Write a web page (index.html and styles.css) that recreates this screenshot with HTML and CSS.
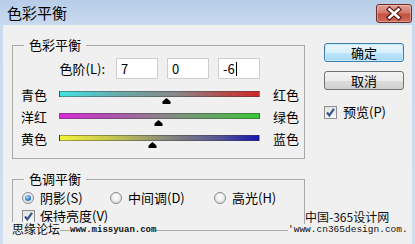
FILE: index.html
```html
<!DOCTYPE html>
<html lang="zh-CN">
<head>
<meta charset="utf-8">
<title>色彩平衡</title>
<link rel="stylesheet" href="styles.css">
</head>
<body>
<div class="window">
  <div class="titlebar">
    <span class="title">色彩平衡</span>
    <div class="close">
      <svg width="34" height="17" viewBox="0 0 34 17">
        <path d="M12.5 4.5 L21.5 12.5 M21.5 4.5 L12.5 12.5" stroke="#5e1d16" stroke-width="5" stroke-linecap="square" fill="none"/>
        <path d="M12.5 4.5 L21.5 12.5 M21.5 4.5 L12.5 12.5" stroke="#ffffff" stroke-width="2.6" stroke-linecap="square" fill="none"/>
      </svg>
    </div>
  </div>
  <div class="client">
    <div class="main">
      <fieldset class="group balance">
        <legend>色彩平衡</legend>
        <div class="levels">
          <span class="levels-label">色阶(L):</span>
          <span class="field">7</span>
          <span class="field">0</span>
          <span class="field">-6<span class="caret"></span></span>
        </div>
        <div class="slider-row">
          <span class="lbl">青色</span>
          <div class="track cyan-red">
            <svg class="thumb" style="left:102px" width="9" height="6" viewBox="0 0 9 6"><path d="M4.5 0 L8.5 3.5 V6 H0.5 V3.5 Z" fill="#000"/></svg>
          </div>
          <span class="lbl-r">红色</span>
        </div>
        <div class="slider-row">
          <span class="lbl">洋红</span>
          <div class="track magenta-green">
            <svg class="thumb" style="left:94px" width="9" height="6" viewBox="0 0 9 6"><path d="M4.5 0 L8.5 3.5 V6 H0.5 V3.5 Z" fill="#000"/></svg>
          </div>
          <span class="lbl-r">绿色</span>
        </div>
        <div class="slider-row">
          <span class="lbl">黄色</span>
          <div class="track yellow-blue">
            <svg class="thumb" style="left:88px" width="9" height="6" viewBox="0 0 9 6"><path d="M4.5 0 L8.5 3.5 V6 H0.5 V3.5 Z" fill="#000"/></svg>
          </div>
          <span class="lbl-r">蓝色</span>
        </div>
      </fieldset>
      <fieldset class="group tone">
        <legend>色调平衡</legend>
        <div class="radios">
          <span class="opt opt-a"><span class="radio on"></span>阴影(S)</span>
          <span class="opt opt-b"><span class="radio"></span>中间调(D)</span>
          <span class="opt"><span class="radio"></span>高光(H)</span>
        </div>
        <div class="opt keep">
          <span class="check"><svg width="11" height="11" viewBox="0 0 11 11"><path d="M2 5.5 L4.3 8.5 L9 1.8" stroke="#3b5592" stroke-width="2.2" fill="none"/></svg></span>保持亮度(V)
        </div>
      </fieldset>
    </div>
    <div class="side">
      <div class="btn default">确定</div>
      <div class="btn">取消</div>
      <div class="opt preview">
        <span class="check"><svg width="11" height="11" viewBox="0 0 11 11"><path d="M2 5.5 L4.3 8.5 L9 1.8" stroke="#3b5592" stroke-width="2.2" fill="none"/></svg></span>预览(P)
      </div>
    </div>
  </div>
  <span class="wm wm-cn">思缘论坛</span>
  <span class="wm wm-url">www.missyuan.com</span>
  <span class="wm wm-r1">中国-365设计网</span>
  <span class="wm wm-r2">'www.cn365design.com.</span>
</div>
</body>
</html>
```

FILE: styles.css
```css
html, body {
  margin: 0;
  padding: 0;
}
body {
  width: 415px;
  height: 244px;
  overflow: hidden;
  background: #f0f0f0;
  font-family: "Noto Sans CJK SC", "Noto Sans", sans-serif;
  font-size: 13px;
  color: #000;
}
.window {
  position: relative;
  width: 415px;
  height: 244px;
  background: linear-gradient(to bottom, #b7cde8 0, #c8daef 25px, #cfdff1 100%);
}
.titlebar {
  height: 25px;
  display: flex;
  justify-content: space-between;
  align-items: flex-start;
  padding: 0 3px 0 7px;
}
.title {
  font-size: 15px;
  line-height: 25px;
  color: #000;
}
.close {
  margin-top: 4px;
  width: 36px;
  height: 19px;
  box-sizing: border-box;
  border: 1px solid #6e2b23;
  border-radius: 3px;
  background: linear-gradient(to bottom, #e2a499 0, #d27a6c 45%, #c4503f 55%, #cc6c5b 100%);
  box-shadow: inset 0 0 0 1px rgba(255, 220, 210, 0.4);
  display: flex;
  align-items: center;
  justify-content: center;
}
.client {
  margin: 0 3px;
  height: 219px;
  box-sizing: border-box;
  padding-left: 9px;
  background: #f0f0f0;
  display: flex;
}
.main {
  width: 293px;
  padding-top: 12px;
}
.group {
  margin: 0;
  padding: 0 8px;
  border: 1px solid #a9a9a9;
  min-width: 0;
  width: 293px;
  box-sizing: border-box;
}
.group legend {
  padding: 0 5px;
  margin-left: 3px;
  line-height: 16px;
  height: 16px;
}
.balance {
  padding-bottom: 5px;
}
.levels {
  display: flex;
  margin-top: 5px;
  margin-bottom: 8px;
  height: 21px;
}
.levels-label {
  width: 84px;
  padding-right: 2px;
  text-align: right;
  line-height: 21px;
}
.field {
  width: 42px;
  height: 21px;
  margin-left: 9px;
  box-sizing: border-box;
  border: 1px solid #cfcfcf;
  background: #fff;
  padding-left: 4px;
  line-height: 19px;
  display: flex;
  align-items: center;
}
.caret {
  display: inline-block;
  width: 1px;
  height: 14px;
  background: #000;
  margin-left: 1px;
}
.slider-row {
  display: flex;
  align-items: flex-start;
  height: 22px;
  white-space: nowrap;
}
.lbl {
  width: 38px;
  line-height: 16px;
  flex: none;
}
.lbl-r {
  margin-left: 13px;
  line-height: 16px;
  flex: none;
}
.track {
  position: relative;
  width: 201px;
  height: 6px;
  margin-top: 4px;
  box-sizing: border-box;
  border: 1px solid rgba(60, 60, 60, 0.45);
  flex: none;
}
.thumb {
  position: absolute;
  top: 6px;
  display: block;
}
.cyan-red {
  background: linear-gradient(to right, #3fe3e3 0, #6aa9a9 30%, #8a8484 60%, #b05252 80%, #d02626 100%);
}
.magenta-green {
  background: linear-gradient(to right, #d82ad8 0, #a85aa8 30%, #848a84 55%, #5eaa5e 80%, #36c836 100%);
}
.yellow-blue {
  background: linear-gradient(to right, #f2f23a 0, #c2c250 28%, #86867e 55%, #545496 80%, #1616b0 100%);
}
.tone {
  margin-top: 12px;
  padding-bottom: 6px;
}
.radios {
  display: flex;
  margin-top: 3px;
  height: 16px;
}
.opt {
  display: flex;
  align-items: center;
  line-height: 16px;
  height: 16px;
  white-space: nowrap;
}
.opt-a {
  width: 88px;
}
.opt-b {
  width: 104px;
}
.radio {
  width: 12px;
  height: 12px;
  margin-left: 1px;
  margin-right: 6px;
  box-sizing: border-box;
  border-radius: 50%;
  border: 1px solid #8c8c8c;
  background: radial-gradient(circle at 50% 40%, #ffffff 0, #f0f0f0 40%, #cfcfcf 100%);
  position: relative;
  flex: none;
}
.radio.on::after {
  content: "";
  position: absolute;
  left: 2px;
  top: 2px;
  width: 6px;
  height: 6px;
  border-radius: 50%;
  background: radial-gradient(circle at 40% 35%, #bfe6ff 0, #3d8fd6 45%, #174f8f 100%);
}
.check {
  width: 13px;
  height: 13px;
  margin-right: 5px;
  box-sizing: border-box;
  border: 1px solid #8f8f8f;
  background: linear-gradient(to bottom, #e4e4e4, #f8f8f8);
  display: flex;
  align-items: center;
  justify-content: center;
  flex: none;
}
.keep {
  margin-top: 2px;
  margin-left: 1px;
}
.side {
  margin-left: 19px;
  padding-top: 18px;
  width: 80px;
}
.btn {
  height: 19px;
  box-sizing: border-box;
  border: 1px solid #707070;
  border-radius: 3px;
  background: linear-gradient(to bottom, #f3f3f3 0, #ebebeb 50%, #dddddd 51%, #cfcfcf 100%);
  text-align: center;
  line-height: 17px;
}
.btn + .btn {
  margin-top: 9px;
}
.btn.default {
  border-color: #3c7fb1;
  background: linear-gradient(to bottom, #eaf6fd 0, #d9f0fc 50%, #bee6fd 51%, #a7d9f5 100%);
  box-shadow: inset 0 0 0 1px #c6ebfc;
}
.preview {
  margin-top: 14px;
}
.preview .check {
  margin-right: 6px;
}
.wm {
  position: absolute;
  white-space: nowrap;
  background: #f0f0f0;
  color: #111;
}
.wm-cn {
  left: 12px;
  top: 222px;
  font-size: 12px;
  line-height: 13px;
}
.wm-url {
  left: 70px;
  top: 226px;
  font-family: "Liberation Mono", monospace;
  font-weight: bold;
  font-size: 9px;
  line-height: 8px;
}
.wm-r1 {
  left: 305px;
  top: 209px;
  font-size: 12px;
  line-height: 15px;
  background: transparent;
}
.wm-r2 {
  left: 288px;
  top: 224px;
  font-family: "Liberation Mono", monospace;
  font-size: 9.5px;
  line-height: 11px;
}
```
